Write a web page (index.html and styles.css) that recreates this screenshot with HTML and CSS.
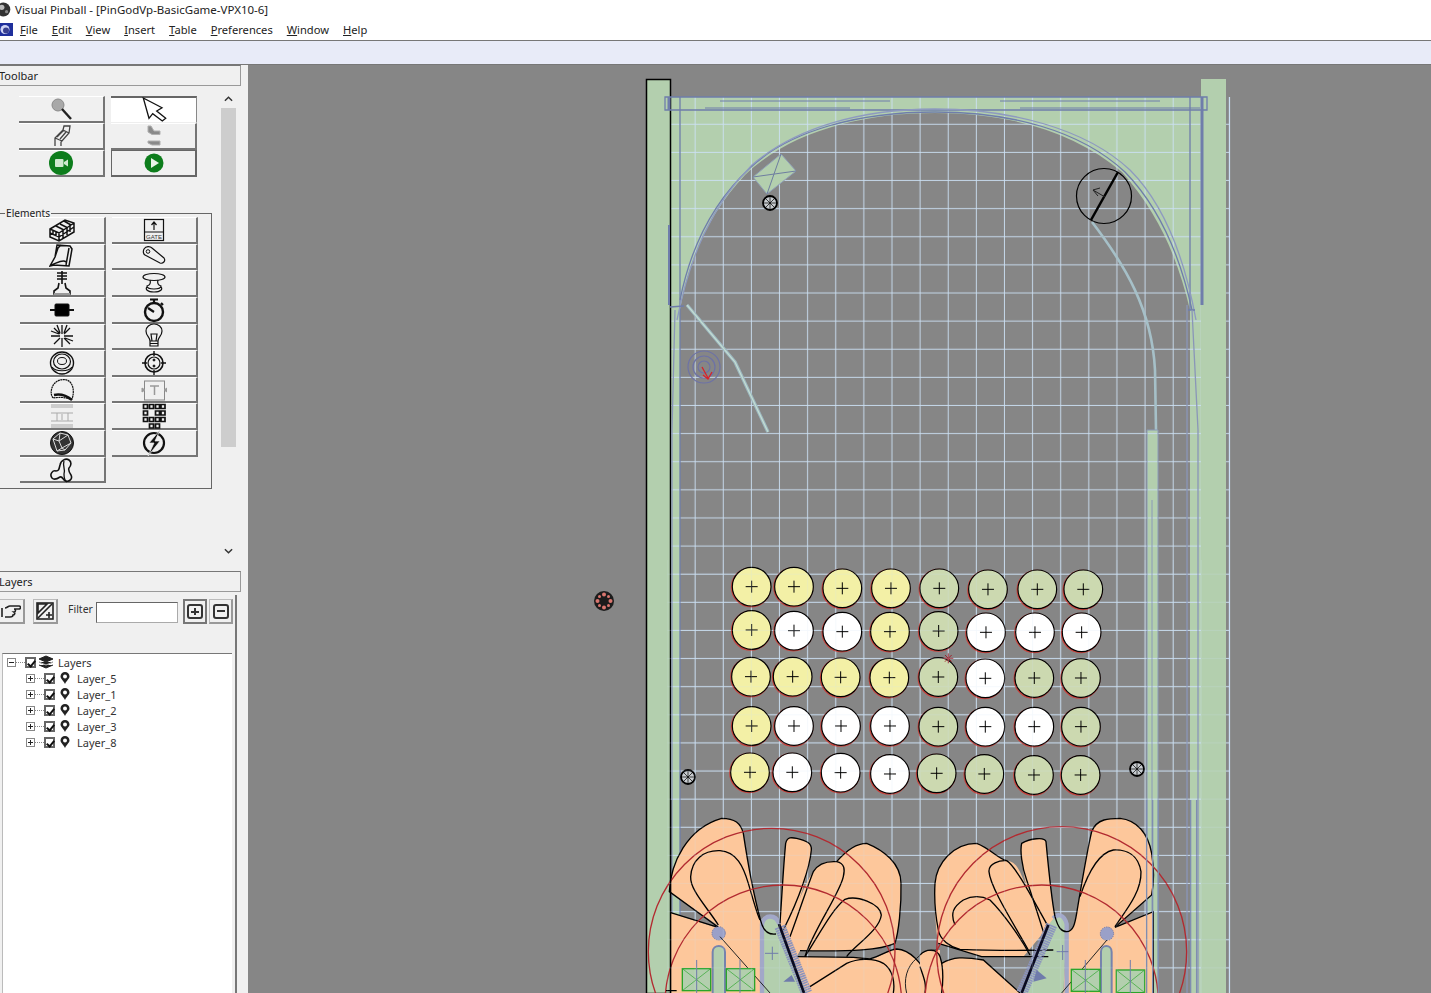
FILE: index.html
```html
<!DOCTYPE html>
<html lang="en">
<head>
    <meta charset="UTF-8">
    <title>Visual Pinball</title>
    <link rel="stylesheet" href="styles.css">
</head>
<body>
    <header class="titlebar">
        <svg class="app-ball" viewBox="0 0 14 14"><circle cx="5" cy="7" r="6.5" fill="#333"/><circle cx="3.5" cy="5" r="2.5" fill="#bbb"/><circle cx="8" cy="9" r="1.5" fill="#888"/></svg>
        <span>Visual Pinball - [PinGodVp-BasicGame-VPX10-6]</span>
    </header>
    <nav class="menubar">
        <svg class="doc-icon" viewBox="0 0 13 13"><rect width="13" height="13" fill="#1f2f9c"/><circle cx="5" cy="6.5" r="4.5" fill="#cfd4f5"/><circle cx="6" cy="7.5" r="3" fill="#39408f"/></svg>
        <a><u>F</u>ile</a>
        <a><u>E</u>dit</a>
        <a><u>V</u>iew</a>
        <a><u>I</u>nsert</a>
        <a><u>T</u>able</a>
        <a><u>P</u>references</a>
        <a><u>W</u>indow</a>
        <a><u>H</u>elp</a>
    </nav>
    <div class="ribbon"></div>

    <div class="workspace">
        <aside class="sidebar">
            <h2 class="panel-title">Toolbar</h2>
            <div class="toolbar-body">
                <div class="toolbar-scroll">
                    <div class="tool-grid">
                        <button class="tool"><svg class="ico" viewBox="0 0 26 26"><circle cx="10" cy="9" r="6" fill="#a8a8a8" stroke="#8a8a8a"/><path d="M14 13l9 10" stroke="#222" stroke-width="2.4"/></svg></button>
                        <button class="tool tool-on"><svg class="ico" viewBox="0 0 26 26"><path d="M2.3 1l18.7 9.7-5.3 3.3 9 7.300-3.400 2.700-9.600-7.300-3.700 4.600z" fill="#fff" stroke-width="1.300"/></svg></button>
                        <button class="tool"><svg class="ico" viewBox="0 0 26 26"><path d="M7 23v-8l8-8 1-4h6l-1 7-8 9v4M7 15l7 3M15 7l6 3M9 14l7-7M12 16l6-7" stroke="#444" stroke-width="1.300"/></svg></button>
                        <button class="tool"><svg class="ico" viewBox="0 0 26 26"><path d="M8 3v6l4 2.500h8V8h-6l-3-5zM8 18h12v4H12l-4-2z" fill="#8a8a8a" stroke="#b0b0b0"/></svg></button>
                        <button class="tool"><svg class="ico" viewBox="0 0 26 26"><circle cx="13" cy="13" r="12" fill="#0d7d1c" stroke="none"/><rect x="7" y="9" width="8.500" height="8" rx="1" fill="#cfe8cf" stroke="none"/><path d="M16 12l4-2.500v7L16 14z" fill="#cfe8cf" stroke="none"/></svg></button>
                        <button class="tool tool-run"><svg class="ico" viewBox="0 0 26 26"><circle cx="13" cy="13" r="9.500" fill="#0d7d1c" stroke="none"/><path d="M10 8l8 5-8 5z" fill="#e8f4e8" stroke="none"/></svg></button>
                    </div>

                    <fieldset class="elements">
                        <legend>Elements</legend>
                        <div class="tool-grid">
                            <button class="tool"><svg class="ico" viewBox="0 0 26 26"><path d="M1 12l15-9 9 3v9L10 24l-9-4zM1 12l9 4 15-10M10 16v8M1 16l9 4 15-10M4 13v4M7 15v4M14 13v8M18 11v7M21 8v7M7 9l8 4M11 7l8 4M15 4l7 4" stroke-width="1.500"/></svg></button>
                            <button class="tool"><svg class="ico" viewBox="0 0 26 26"><rect x="3.500" y="2.500" width="19" height="21" stroke-width="1.200"/><path d="M3.500 15h19M13 13V5M10.500 8L13 5l2.500 3" stroke-width="1.200"/><text x="13" y="22" class="gate-text">GATE</text></svg></button>
                            <button class="tool"><svg class="ico" viewBox="0 0 26 26"><path d="M8 2l13 1 2 3-3 17-15-1-4 1 5-9zM20 5l-3 17M6 14l3-9 3-3M1 22c4 0 13-7 16-3" stroke-width="1.500"/></svg></button>
                            <button class="tool"><svg class="ico" viewBox="0 0 26 26"><path d="M3 6c2-3 6-3 8-1l12 10c2 3-1 6-4 5L4 12c-2-1-2-4-1-6z" stroke-width="1.200"/><circle cx="7" cy="8.500" r="1.800" stroke-width="1"/></svg></button>
                            <button class="tool"><svg class="ico" viewBox="0 0 26 26"><path d="M13 1v13M8 3h10M8 6h10M8 9h10M10 13l-1 5-4 3v3h16v-3l-4-3-1-5" stroke-width="1.600"/><path d="M5 24h16" stroke="#999" stroke-width="2"/></svg></button>
                            <button class="tool"><svg class="ico" viewBox="0 0 26 26"><ellipse cx="13" cy="7" rx="11" ry="3.500" stroke-width="1.200"/><path d="M9 10c1 3 0 5-3 6 0 4 14 4 14 0-3-1-4-3-3-6M6 17c-2 2 0 5 7 5s9-3 7-5" stroke-width="1.200"/></svg></button>
                            <button class="tool"><svg class="ico" viewBox="0 0 26 26"><rect x="6" y="7" width="14" height="12" rx="1" fill="#000"/><path d="M1 13h5M20 13h5" stroke-width="2"/></svg></button>
                            <button class="tool"><svg class="ico" viewBox="0 0 26 26"><circle cx="13" cy="15" r="9" stroke-width="2.400"/><path d="M9 2.500h8M13 3v3M13 15l-6-4M20 6l2 2" stroke-width="2.200"/></svg></button>
                            <button class="tool"><svg class="ico" viewBox="0 0 26 26"><path d="M13 2v9M13 15v9M2 13h9M15 13h9M5 5l6 6M21 5l-6 6M5 21l6-6M21 21l-6-6M8 2l3 8M18 2l-3 8M2 8l8 3M24 18l-8-3" stroke-width="1.300"/></svg></button>
                            <button class="tool"><svg class="ico" viewBox="0 0 26 26"><path d="M9 18c0-4-4-5-4-10a8 7 0 0 1 16 0c0 5-4 6-4 10zM9 18h8v5H9zM9 20.500h8M11 18l-1-7h6l-1 7" stroke-width="1.200"/></svg></button>
                            <button class="tool"><svg class="ico" viewBox="0 0 26 26"><ellipse cx="13" cy="13" rx="11.500" ry="11" stroke-width="1.400"/><ellipse cx="13" cy="11.500" rx="8.500" ry="7.500" stroke-width="1.200"/><ellipse cx="13" cy="11" rx="4.500" ry="3.500" stroke-width="1"/><path d="M3 17c3 5 17 5 20 0" stroke-width="1.200"/></svg></button>
                            <button class="tool"><svg class="ico" viewBox="0 0 26 26"><circle cx="13" cy="13" r="9" stroke-width="1.600"/><circle cx="13" cy="13" r="6" stroke-width="1.200"/><path d="M13 1v5M13 20v5M1 13h5M20 13h5" stroke-width="1.400"/><circle cx="13" cy="10" r="1" fill="#111"/><circle cx="13" cy="16" r="1" fill="#111"/></svg></button>
                            <button class="tool"><svg class="ico" viewBox="0 0 26 26"><path d="M4 21c-3-4-2-10 1-14 4-5 12-6 16-2s4 12 2 17c-4 1-4-3-19-1z" stroke-dasharray="2 .5" stroke-width="1.200"/><path d="M5 18c5-1 12 0 18 5" stroke-width="2.400"/></svg></button>
                            <button class="tool"><svg class="ico" viewBox="0 0 26 26"><rect x="3.500" y="4" width="20" height="19" stroke="#888" stroke-width="1"/><path d="M9 9h9M13.500 9v9" stroke="#999" stroke-width="1.500"/><path d="M1 11l3 2-3 2zM26 11l-3 2 3 2z" fill="#999" stroke="#999"/></svg></button>
                            <button class="tool"><svg class="ico" viewBox="0 0 26 26"><path d="M2 2h22M2 4h22M2 10h22M2 18h22M2 22h22M2 24h22M8 10v8M19 10v8M13 11v6" stroke="#aaa" stroke-width="1"/></svg></button>
                            <button class="tool"><svg class="ico" viewBox="0 0 26 26"><path d="M2.500 1.500h4v4h-4zM8.500 1.500h4v4h-4zM14.500 1.500h4v4h-4zM20 1.500h4v4h-4zM2.500 8h4v4h-4zM14.500 8h4v4h-4zM20 8h4v4h-4zM2.500 14.500h4v4h-4zM8.500 14.500h4v4h-4zM14.500 14.500h4v4h-4zM20 14.500h4v4h-4zM8.500 21h4v4h-4zM14.500 21h4v4h-4z" stroke-width="1.700"/></svg></button>
                            <button class="tool"><svg class="ico" viewBox="0 0 26 26"><circle cx="13" cy="13" r="11.500" fill="#333" stroke-width="1"/><path d="M4 9l7-6 8 2 3 8-6 7-8 1zM11 3l-1 8 9-6M10 11l-6-2M10 11l3 7 9-5M13 18l-5 3M13 18l3 2" stroke="#ddd" stroke-width="1"/></svg></button>
                            <button class="tool"><svg class="ico" viewBox="0 0 26 26"><circle cx="13" cy="13" r="10" stroke-width="2.200"/><path d="M19 0L8 13h5L7 26l12-15h-5l5-11z" fill="#111" stroke="#f0f0f0" stroke-width=".7"/></svg></button>
                            <button class="tool"><svg class="ico" viewBox="0 0 26 26"><path d="M3 21c-3-4 1-8 4-7 3 0 3-2 4-6 1-5 6-7 9-5 3 2 2 6 0 8-1 2 0 4 2 7 2 4-2 7-5 6-3 0-3-5-6-4-3 2-6 3-8 1z" stroke-width="1.600"/><path d="M15 4c-2 6 2 8 0 13 0 3 1 7 3 8" stroke-width="1.300"/></svg></button>
                        </div>
                    </fieldset>
                </div>
                <div class="scrollbar">
                    <svg class="chevron" viewBox="0 0 10 6"><path d="M1 5l4-4 4 4"/></svg>
                    <div class="scroll-thumb"></div>
                    <svg class="chevron" viewBox="0 0 10 6"><path d="M1 1l4 4 4-4"/></svg>
                </div>
            </div>

            <h2 class="panel-title layers-title">Layers</h2>
            <section class="layers">
                <div class="filter-row">
                    <button class="small-btn hand"><svg viewBox="0 0 20 18"><path d="M1 6v9M4 6c2 0 3-2 5-2h9a1.500 1.500 0 0 1 0 3h-5c2 0 2 3 0 3 1.500 1 .5 3-1 3 0 2-2 2-3 2H4" class="ico-line"/></svg></button>
                    <button class="small-btn assign"><svg viewBox="0 0 20 20"><rect x="2" y="2" width="16" height="16" class="ico-line"/><path d="M3 17L17 3M3 3h9L3 12zM14 11v6M11 14h6" class="ico-line"/></svg></button>
                    <label class="filter-label">Filter</label>
                    <input class="filter-input" type="text">
                    <button class="small-btn square on"><span class="sq-plus"></span></button>
                    <button class="small-btn square"><span class="sq-minus"></span></button>
                </div>
                <ul class="tree">
                    <li class="tree-root">
                        <span class="expander minus"></span><span class="dots-h"></span>
                        <span class="check"></span>
                        <svg class="stack" viewBox="0 0 16 14"><path d="M8 1l7 3-7 3-7-3zM1 7l7 3 7-3M1 10l7 3 7-3" fill="#222" stroke="#222"/><path d="M1 7l7 3 7-3" fill="none" stroke="#fff" stroke-width=".7"/></svg>
                        <span>Layers</span>
                    </li>
                    <li class="tree-item"><span class="expander"></span><span class="dots-h"></span><span class="check"></span><svg class="pin" viewBox="0 0 10 12"><path d="M5 12C3 8 .5 6.500 .5 4.500a4.500 4.500 0 0 1 9 0c0 2-2.500 3.500-4.500 7.500z" fill="#222"/><circle cx="5" cy="4.500" r="2" fill="#fff"/></svg><span>Layer_5</span></li>
                    <li class="tree-item"><span class="expander"></span><span class="dots-h"></span><span class="check"></span><svg class="pin" viewBox="0 0 10 12"><path d="M5 12C3 8 .5 6.500 .5 4.500a4.500 4.500 0 0 1 9 0c0 2-2.500 3.500-4.500 7.500z" fill="#222"/><circle cx="5" cy="4.500" r="2" fill="#fff"/></svg><span>Layer_1</span></li>
                    <li class="tree-item"><span class="expander"></span><span class="dots-h"></span><span class="check"></span><svg class="pin" viewBox="0 0 10 12"><path d="M5 12C3 8 .5 6.500 .5 4.500a4.500 4.500 0 0 1 9 0c0 2-2.500 3.500-4.500 7.500z" fill="#222"/><circle cx="5" cy="4.500" r="2" fill="#fff"/></svg><span>Layer_2</span></li>
                    <li class="tree-item"><span class="expander"></span><span class="dots-h"></span><span class="check"></span><svg class="pin" viewBox="0 0 10 12"><path d="M5 12C3 8 .5 6.500 .5 4.500a4.500 4.500 0 0 1 9 0c0 2-2.500 3.500-4.500 7.500z" fill="#222"/><circle cx="5" cy="4.500" r="2" fill="#fff"/></svg><span>Layer_3</span></li>
                    <li class="tree-item"><span class="expander"></span><span class="dots-h"></span><span class="check"></span><svg class="pin" viewBox="0 0 10 12"><path d="M5 12C3 8 .5 6.500 .5 4.500a4.500 4.500 0 0 1 9 0c0 2-2.500 3.500-4.500 7.500z" fill="#222"/><circle cx="5" cy="4.500" r="2" fill="#fff"/></svg><span>Layer_8</span></li>
                </ul>
            </section>
        </aside>

        <main class="canvas">
            <svg class="table" viewBox="248 65 1183 928" preserveAspectRatio="xMinYMin slice">
                <defs>
                    <pattern id="grid" x="653" y="110.240" width="28.120" height="28.120" patternUnits="userSpaceOnUse">
                        <path d="M14 0V28.120M0 14H28.120" fill="none" stroke="#cbe0f4" stroke-width=".9"/>
                    </pattern>
                    <g id="target">
                        <circle cx="-2" cy="2" r="58" fill="none" stroke="#c8423c" stroke-width="5"/>
                        <circle r="58" fill="inherit" stroke="#000" stroke-width="3.500"/>
                        <path d="M-18 0H18M0 -18V18" stroke="#000" stroke-width="3"/>
                    </g>
                    <g id="wheel">
                        <circle r="7" fill="#c8ccd0" stroke="#000" stroke-width="1.800"/>
                        <path d="M0 -7V7M-7 0H7M-5 -5L5 5M-5 5L5 -5" stroke="#000" stroke-width=".7"/>
                    </g>
                </defs>

                <!-- playfield -->
                <path d="M670 97H1201V993H1190V310C1178 260 1160 215 1122 172C1075 132 1010 113 935 113C860 113 790 132 745 175C710 212 688 260 680 310V993H670Z" fill="#b3cfae"/>
                <rect x="1147" y="430" width="11" height="563" fill="#b3cfae"/>
                <rect x="667" y="97" width="563" height="896" fill="url(#grid)"/>

                <!-- walls -->
                <rect x="646.500" y="79.500" width="24" height="914" fill="#b3cfae" stroke="#000" stroke-width="1.500"/>
                <rect x="1201" y="79" width="25" height="914" fill="#b3cfae"/>
                <path d="M1229.500 97V993" stroke="#cbe0f4" stroke-width="1.200"/>

                <!-- guide rails -->
                <g fill="none" stroke="#6f7dab" stroke-width="1.300">
                    <path d="M665 97H1207V110H665ZM665 110H680M1190 97V310"/>
                    <path d="M680 97V993" />
                    <path d="M680 300C690 250 710 205 750 168C790 130 860 112 935 112C1010 112 1080 130 1125 172C1160 208 1180 255 1192 310"/>
                    <path d="M677 320C690 255 712 205 752 165C795 128 860 109 935 109C1010 109 1085 128 1130 170C1165 205 1185 260 1196 320" stroke="#8e9ac0"/>
                    <path d="M705 108H850M1020 108H1200M720 101H890M1000 101H1160" stroke-width="1"/>
                    <path d="M1202 97V305" stroke-width="3"/>
                    <path d="M669 97V110" stroke-width="3"/>
                    <path d="M669 225V305" stroke-width="2"/>
                    <path d="M1195 310H1188M670 307L684 306"/>
                    <path d="M1192 310L1198 430V993M1187 305V993" stroke="#8a96b8"/>
                    <path d="M675 310L672 430V993" stroke="#8a96b8"/>
                </g>

                <!-- gate block top left -->
                <path d="M753 177L781 154L796 171L767 194Z" fill="#b3cfae" stroke="#90a0b8"/>
                <path d="M753 177L796 171M781 154L767 194" stroke="#6e7da0" fill="none"/>
                <use href="#wheel" x="770" y="203"/>

                <!-- kicker top right -->
                <circle cx="1104" cy="196" r="27.500" fill="none" stroke="#000" stroke-width="1.200"/>
                <path d="M1118 172L1091 220" stroke="#000" stroke-width="2.500"/>
                <path d="M1105 197L1093 190M1093 190L1100 188M1093 190L1098 196" stroke="#222" fill="none"/>

                <!-- plastic rails -->
                <path d="M1092 222C1125 265 1152 310 1155 370L1156 430" fill="none" stroke="#a6c0c8" stroke-width="2.600"/>
                <path d="M687 305L735 362L768 432" fill="none" stroke="#9db8c0" stroke-width="3.400"/>
                <path d="M687 305L735 362L768 432" fill="none" stroke="#c4ddd2" stroke-width="1.200"/>

                <!-- scoop -->
                <g fill="none" stroke="#6d72a6" stroke-width="1.200">
                    <circle cx="704" cy="367" r="16"/>
                    <circle cx="704" cy="367" r="11"/>
                    <circle cx="704" cy="367" r="6"/>
                </g>
                <path d="M702 367L708 378M712 372L708 379L703 375" fill="none" stroke="#d8222a" stroke-width="1.300"/>

                <!-- shooter lane -->
                <path d="M1147 430H1158V993M1147 430V993" fill="none" stroke="#8a9ab8"/>
                <path d="M1152 500V993" stroke="#8a9ab8" fill="none"/>

                <!-- loose parts -->
                <g>
                    <circle cx="604" cy="601" r="10" fill="#1c1c1c"/>
                    <g fill="#d9766f">
                        <circle cx="604" cy="594.500" r="2"/><circle cx="610.500" cy="601" r="2"/><circle cx="604" cy="607.500" r="2"/><circle cx="597.500" cy="601" r="2"/>
                        <circle cx="599.500" cy="596.500" r="1.500"/><circle cx="608.500" cy="596.500" r="1.500"/><circle cx="599.500" cy="605.500" r="1.500"/><circle cx="608.500" cy="605.500" r="1.500"/>
                    </g>
                </g>
                <use href="#wheel" x="688" y="777"/>
                <use href="#wheel" x="1137" y="769"/>

                <!-- target bank, drawn at 3x -->
                <g transform="translate(720 560) scale(.3333)">
                    <g class="t-y">
                        <use href="#target" x="95" y="80"/><use href="#target" x="222" y="80"/><use href="#target" x="367" y="85"/><use href="#target" x="513" y="85"/>
                        <use href="#target" x="95" y="210"/><use href="#target" x="510" y="215"/>
                        <use href="#target" x="93" y="350"/><use href="#target" x="218" y="350"/><use href="#target" x="362" y="352"/><use href="#target" x="508" y="353"/>
                        <use href="#target" x="95" y="498"/>
                        <use href="#target" x="90" y="637"/>
                    </g>
                    <g class="t-g">
                        <use href="#target" x="658" y="85"/><use href="#target" x="804" y="88"/><use href="#target" x="952" y="88"/><use href="#target" x="1090" y="88"/>
                        <use href="#target" x="656" y="213"/>
                        <use href="#target" x="655" y="351"/><use href="#target" x="943" y="354"/><use href="#target" x="1083" y="354"/>
                        <use href="#target" x="655" y="500"/><use href="#target" x="1083" y="500"/>
                        <use href="#target" x="650" y="640"/><use href="#target" x="793" y="642"/><use href="#target" x="942" y="645"/><use href="#target" x="1082" y="645"/>
                    </g>
                    <g class="t-w">
                        <use href="#target" x="222" y="212"/><use href="#target" x="367" y="215"/><use href="#target" x="798" y="217"/><use href="#target" x="945" y="217"/><use href="#target" x="1085" y="217"/>
                        <use href="#target" x="796" y="355"/>
                        <use href="#target" x="222" y="498"/><use href="#target" x="363" y="498"/><use href="#target" x="510" y="498"/><use href="#target" x="796" y="500"/><use href="#target" x="943" y="500"/>
                        <use href="#target" x="217" y="637"/><use href="#target" x="362" y="638"/><use href="#target" x="510" y="642"/>
                    </g>
                    <path d="M670 295H700M685 280V310M675 285L695 305M675 305L695 285" stroke="#a0222a" stroke-width="3"/>
                </g>

                <!-- lower left flippers, drawn at 3x -->
                <g transform="translate(640 800) scale(.3333)" class="lower">
                    <path class="peach" d="M88 275C92 190 140 85 245 55C285 55 302 70 310 100C325 200 345 300 362 362V579H92V338L225 382L236 378Z"/>
                    <path class="peach" d="M420 370C425 300 430 200 437 130C442 110 455 112 470 115C500 122 516 130 514 150C510 200 490 260 478 300C490 270 505 235 520 215C535 190 560 183 590 185C620 150 650 130 680 130C730 150 783 190 783 250C785 320 775 400 765 430C720 450 640 455 480 452L470 470L640 472L700 476C730 465 750 447 770 447C800 450 830 470 850 500C875 450 880 450 900 450V579H490Z"/>
                    <path class="green" d="M362 362C370 345 410 340 418 370L500 579H362Z"/>
                    <path class="arch" d="M366 579V372C372 342 408 342 418 372"/>
                    <path class="outline" d="M92 338L235 382L88 275C92 190 140 85 245 55C285 55 302 70 310 100C325 200 345 300 362 362C370 395 385 405 408 402"/>
                    <path class="outline" d="M235 375C200 320 150 270 152 230C155 180 190 150 240 152C290 155 310 200 325 250C340 300 350 340 360 360"/>
                    <path class="outline" d="M420 370C425 300 430 200 437 130C442 110 455 112 470 115C500 122 516 130 514 150C510 200 480 290 430 390"/>
                    <path class="outline" d="M450 410C480 330 505 250 520 215C535 190 560 183 590 185C615 190 615 210 610 230C600 280 520 390 495 470"/>
                    <path class="outline" d="M590 185C620 150 650 130 680 130C730 150 783 190 783 250C785 320 775 400 765 430C720 450 640 455 480 452"/>
                    <path class="outline" d="M495 470C540 400 575 330 615 298C650 285 720 310 724 345C720 390 640 440 620 470"/>
                    <path class="outline" d="M470 470L640 472L690 477C730 465 750 447 770 447C810 450 850 490 858 530L865 579"/>
                    <path class="outline" d="M510 560L620 490C650 476 700 472 730 490C760 510 765 550 760 579"/>
                    <path class="outline thin" d="M800 579C790 540 800 500 830 475C850 455 870 450 890 450"/>
                    <path class="band" d="M420 380L500 579"/>
                    <path class="flipbar" d="M417 372L492 579"/>
                    <path class="blue" d="M375 460H415M397 440V480"/>
                    <path class="blue-fill" d="M430 545L455 525L465 545Z"/>

                    <circle cx="236" cy="400" r="20" class="bumper"/>
                    <path class="outline thin" d="M240 410L390 579"/>
                    <path class="lane" d="M218 579V456C218 432 255 432 255 456V579"/>
                    <g class="box"><rect x="127" y="506" width="85" height="66"/><path d="M127 506L212 572M212 506L127 572"/></g>
                    <g class="box"><rect x="259" y="506" width="85" height="66"/><path d="M259 506L344 572M344 506L259 572"/></g>
                    <path class="blue" d="M170 480V579M300 480V579" stroke-width="6"/>
                    <circle cx="395" cy="455" r="370" class="ring"/>
                    <circle cx="430" cy="610" r="355" class="ring"/>
                    <path class="outline" d="M92 0V579M78 572H110"/>
                </g>

                <!-- lower right flippers, drawn at 3x -->
                <g transform="translate(920 800) scale(.3333)" class="lower">
                    <path class="peach" d="M515 95C530 55 570 55 600 55C650 60 685 100 695 160C705 220 700 260 695 285L590 380L700 335V579H430L440 395C460 395 465 370 470 340C480 280 500 160 515 95Z"/>
                    <path class="peach" d="M45 250C50 190 100 130 170 130C210 145 240 180 260 182C295 185 300 220 320 260C305 200 300 150 305 130C330 115 375 110 378 125C385 200 395 300 405 350L385 380L310 470H185L55 430L50 400C45 340 42 300 45 250Z"/>
                    <path class="peach" d="M0 465C20 445 50 445 65 490C100 470 130 470 190 480L300 579H0Z"/>
                    <path class="green" d="M385 375L405 350C425 340 440 365 440 395L430 579H300Z"/>
                    <path class="arch" d="M440 579V372C432 342 412 340 400 355"/>
                    <path class="outline" d="M515 95C530 55 570 55 600 55C650 60 685 100 695 160C705 220 700 260 695 285L585 382L700 335V579"/>
                    <path class="outline" d="M585 380C610 340 665 280 663 215C655 165 620 148 580 150C530 160 500 230 480 290"/>
                    <path class="outline" d="M515 95C500 160 480 280 470 340C465 370 460 395 440 395C425 395 415 385 405 350"/>
                    <path class="outline" d="M405 350C395 300 385 200 378 125C375 110 330 115 305 130C300 150 305 200 320 240C335 285 350 330 370 395"/>
                    <path class="outline" d="M385 380C350 320 290 200 260 182C240 180 205 190 207 215C210 260 280 370 325 450"/>
                    <path class="outline" d="M45 250C50 190 100 130 170 130C210 145 240 180 260 182M45 250C42 300 45 340 55 390C60 420 90 440 120 448C170 450 300 452 400 450"/>
                    <path class="outline" d="M105 375C90 340 100 320 130 300C160 285 190 290 210 300C250 340 300 410 330 465"/>
                    <path class="outline" d="M55 430L185 470H385"/>
                    <path class="outline" d="M65 490C100 470 130 470 190 480L300 579"/>
                    <path class="outline" d="M0 465C20 445 50 445 60 470C70 500 70 540 65 579M0 500C10 530 20 550 15 579"/>
                    <path class="band" d="M395 375L305 579"/>
                    <path class="flipbar" d="M385 375L305 579"/>
                    <path class="blue" d="M410 455H445M428 435V480"/>
                    <path class="blue-fill" d="M350 510L380 535L340 545Z"/>

                    <circle cx="561" cy="401" r="20" class="bumper"/>
                    <path class="outline thin" d="M561 420L425 579"/>
                    <path class="lane" d="M543 579V456C543 432 575 432 575 456V579"/>
                    <g class="box"><rect x="454" y="508" width="86" height="66"/><path d="M454 508L540 574M540 508L454 574"/></g>
                    <g class="box"><rect x="589" y="510" width="85" height="68"/><path d="M589 510L674 578M674 510L589 578"/></g>
                    <path class="blue" d="M496 480V579M631 480V579" stroke-width="6"/>
                    <circle cx="425" cy="455" r="375" class="ring"/>
                    <circle cx="365" cy="605" r="350" class="ring"/>
                    <path class="rail" d="M680 0V579M698 0V579M715 0V579M812 0V579M830 0V579"/>
                </g>

                <!-- grid shows faintly through the parts -->
                <rect x="667" y="560" width="563" height="433" fill="url(#grid)" opacity=".22"/>
            </svg>
        </main>
    </div>
</body>
</html>
```

FILE: styles.css
```css
*{
    box-sizing: border-box;
    padding: 0;
    margin: 0;
}
body{
    height: 993px;
    overflow: hidden;
    background-color: #fff;
    font-family: "Noto Sans", sans-serif;
    font-size: 11.5px;
    color: #222;
    display: flex;
    flex-direction: column;
}
.titlebar{
    height: 18px;
    display: flex;
    align-items: center;
    gap: 2px;
    font-size: 11.5px;
    margin-left: -2px;
}
.app-ball{
    width: 15px;
    height: 15px;
}
.menubar{
    height: 23px;
    display: flex;
    align-items: center;
    gap: 14px;
    border-bottom: 1px solid #777;
    font-size: 11.150px;
}
.doc-icon{
    width: 13px;
    height: 13px;
    margin-right: -7px;
}
.ribbon{
    height: 24px;
    background-color: #e8ebf8;
    border-bottom: 1px solid #777;
}
.workspace{
    flex: 1;
    display: flex;
    min-height: 0;
}
.sidebar{
    width: 248px;
    flex: none;
    background-color: #f0f0f0;
    display: flex;
    flex-direction: column;
    overflow: hidden;
}
.panel-title{
    width: 243px;
    height: 21px;
    margin-left: -2px;
    line-height: 19px;
    font-size: 11px;
    font-weight: normal;
    border: 1px solid #999;
    border-top-color: #777;
    flex: none;
}
.toolbar-body{
    height: 485px;
    display: flex;
    flex: none;
}
.toolbar-scroll{
    width: 221px;
    flex: none;
    padding-top: 10px;
}
.tool-grid{
    display: grid;
    grid-template-columns: 86px 86px;
    grid-auto-rows: 27px;
    column-gap: 6px;
    margin-left: 19px;
}
.tool{
    background-color: #f0f0f0;
    border: none;
    border-right: 2px solid #757575;
    border-bottom: 2px solid #757575;
    border-top: 1px solid #fff;
    display: flex;
    align-items: center;
    justify-content: center;
}
.tool-on{
    background-color: #fff;
    border-top: 2px solid #666;
    border-right: 1px solid #888;
    border-bottom: 1px solid #eee;
}
.tool-run{
    border: 2px solid #666;
    border-top-width: 1px;
    border-left-width: 1px;
}
.ico{
    width: 26px;
    height: 26px;
    fill: none;
    stroke: #111;
    flex: none;
}
.gate-text{
    font-family: "Liberation Sans", sans-serif;
    font-size: 6px;
    text-anchor: middle;
    fill: #333;
    stroke: none;
}
.elements{
    margin: 32px 0 0 -2px;
    width: 214px;
    height: 280px;
    border: 1px solid #666;
}
.elements legend{
    position: relative;
    z-index: 1;
    margin-left: 6px;
    padding: 0 1px;
    font-size: 10.200px;
    line-height: 9px;
    height: 9px;
}
.elements .tool-grid{
    margin-left: 21px;
    grid-auto-rows: 26.650px;
    margin-top: -1px;
}
.scrollbar{
    width: 15px;
    display: flex;
    flex-direction: column;
    align-items: center;
    padding-top: 10px;
}
.chevron{
    width: 9px;
    height: 6px;
    fill: none;
    stroke: #333;
    stroke-width: 1.600;
    flex: none;
}
.scroll-thumb{
    width: 15px;
    height: 339px;
    margin: 6px 0 101px;
    background-color: #cdcdcd;
    flex: none;
}
.layers{
    flex: 1;
    width: 237px;
    border-right: 2px solid #777;
    margin-top: 3px;
    display: flex;
    flex-direction: column;
}
.filter-row{
    height: 58px;
    display: flex;
    align-items: flex-start;
    padding-top: 4px;
    margin-left: -3px;
}
.small-btn{
    width: 28px;
    height: 25px;
    background-color: #f0f0f0;
    border: 1px solid #bbb;
    border-right: 2px solid #999;
    border-bottom: 2px solid #999;
    display: flex;
    align-items: center;
    justify-content: center;
    flex: none;
}
.small-btn svg{
    width: 20px;
    height: 20px;
}
.ico-line{
    fill: none;
    stroke: #222;
    stroke-width: 1.600;
}
.hand{
    margin-right: 8px;
}
.assign{
    width: 25px;
    margin-right: 10px;
}
.filter-label{
    width: 29px;
    padding-top: 3px;
    font-size: 10.500px;
    color: #333;
}
.filter-input{
    width: 82px;
    height: 21px;
    margin-top: 3px;
    background-color: #fff;
    border: 1px solid #aaa;
    border-top-color: #666;
    border-left-color: #666;
    margin-right: 5px;
}
.square{
    width: 24px;
    margin-right: 2px;
}
.square.on{
    border: 2px solid #777;
}
.sq-plus,.sq-minus{
    width: 16px;
    height: 15px;
    border: 2px solid #333;
    border-radius: 3px;
    position: relative;
    display: block;
}
.sq-plus::before,.sq-minus::before{
    content: "";
    position: absolute;
    left: 2px;
    right: 2px;
    top: 4.500px;
    height: 2px;
    background-color: #333;
}
.sq-plus::after{
    content: "";
    position: absolute;
    top: 2px;
    bottom: 2px;
    left: 5px;
    width: 2px;
    background-color: #333;
}
.tree{
    flex: 1;
    list-style: none;
    background-color: #fff;
    margin: 0 3px 0 2px;
    border-top: 1px solid #777;
    border-left: 1px solid #bbb;
    font-size: 11px;
    color: #333;
}
.tree li{
    height: 16px;
    display: flex;
    align-items: center;
}
.tree-root{
    padding-left: 4px;
}
.tree-item{
    padding-left: 23px;
}
.expander{
    width: 9px;
    height: 9px;
    border: 1px solid #888;
    background:
        linear-gradient(#222,#222) center/5px 1px no-repeat,
        linear-gradient(#222,#222) center/1px 5px no-repeat,
        #fff;
    flex: none;
}
.expander.minus{
    background:
        linear-gradient(#222,#222) center/5px 1px no-repeat,
        #fff;
}
.dots-h{
    width: 9px;
    border-top: 1px dotted #888;
    flex: none;
}
.check{
    width: 11px;
    height: 11px;
    border: 2px solid #666;
    background-color: #fff;
    flex: none;
    position: relative;
}
.check::after{
    content: "";
    position: absolute;
    left: 2px;
    top: 0;
    width: 3px;
    height: 6px;
    border-right: 2px solid #111;
    border-bottom: 2px solid #111;
    transform: rotate(40deg);
}
.stack{
    width: 16px;
    height: 14px;
    margin: 0 4px 0 2px;
    flex: none;
}
.pin{
    width: 10px;
    height: 12px;
    margin: 0 7px 0 5px;
    flex: none;
}
.canvas{
    flex: 1;
    background-color: #868686;
    min-width: 0;
    overflow: hidden;
}
.table{
    display: block;
    width: 100%;
    height: 100%;
}
.t-y{
    fill: #f3f0a6;
}
.t-g{
    fill: #ccd9b0;
}
.t-w{
    fill: #fff;
}
.lower .peach{
    fill: #fdc79b;
}
.lower .green{
    fill: #b3cfae;
}
.outline{
    fill: none;
    stroke: #000;
    stroke-width: 4;
}
.outline.thin{
    stroke-width: 3;
    stroke: #222;
}
.ring{
    fill: none;
    stroke: #b22a30;
    stroke-width: 4;
}
.rail{
    fill: none;
    stroke: #7f8db0;
    stroke-width: 4;
}
.arch{
    fill: none;
    stroke: #a2a8c8;
    stroke-width: 13;
}
.band{
    fill: none;
    stroke: #8b93bd;
    stroke-width: 34;
    stroke-dasharray: 5 2;
}
.flipbar{
    fill: none;
    stroke: #0a0a20;
    stroke-width: 8;
}
.blue{
    fill: none;
    stroke: #6f7bab;
    stroke-width: 3;
}
.blue-fill{
    fill: #6f7bab;
}
.bumper{
    fill: #9aa0c8;
    stroke: #7079a8;
    stroke-width: 3;
    stroke-dasharray: 4 3;
}
.lane{
    fill: #b3cfae;
    stroke: #7683ad;
    stroke-width: 6;
}
.box{
    fill: none;
    stroke: #2aa52a;
    stroke-width: 4;
}
.box rect{
    fill: #b3cfae;
}
.box path{
    stroke-width: 2;
}
```
